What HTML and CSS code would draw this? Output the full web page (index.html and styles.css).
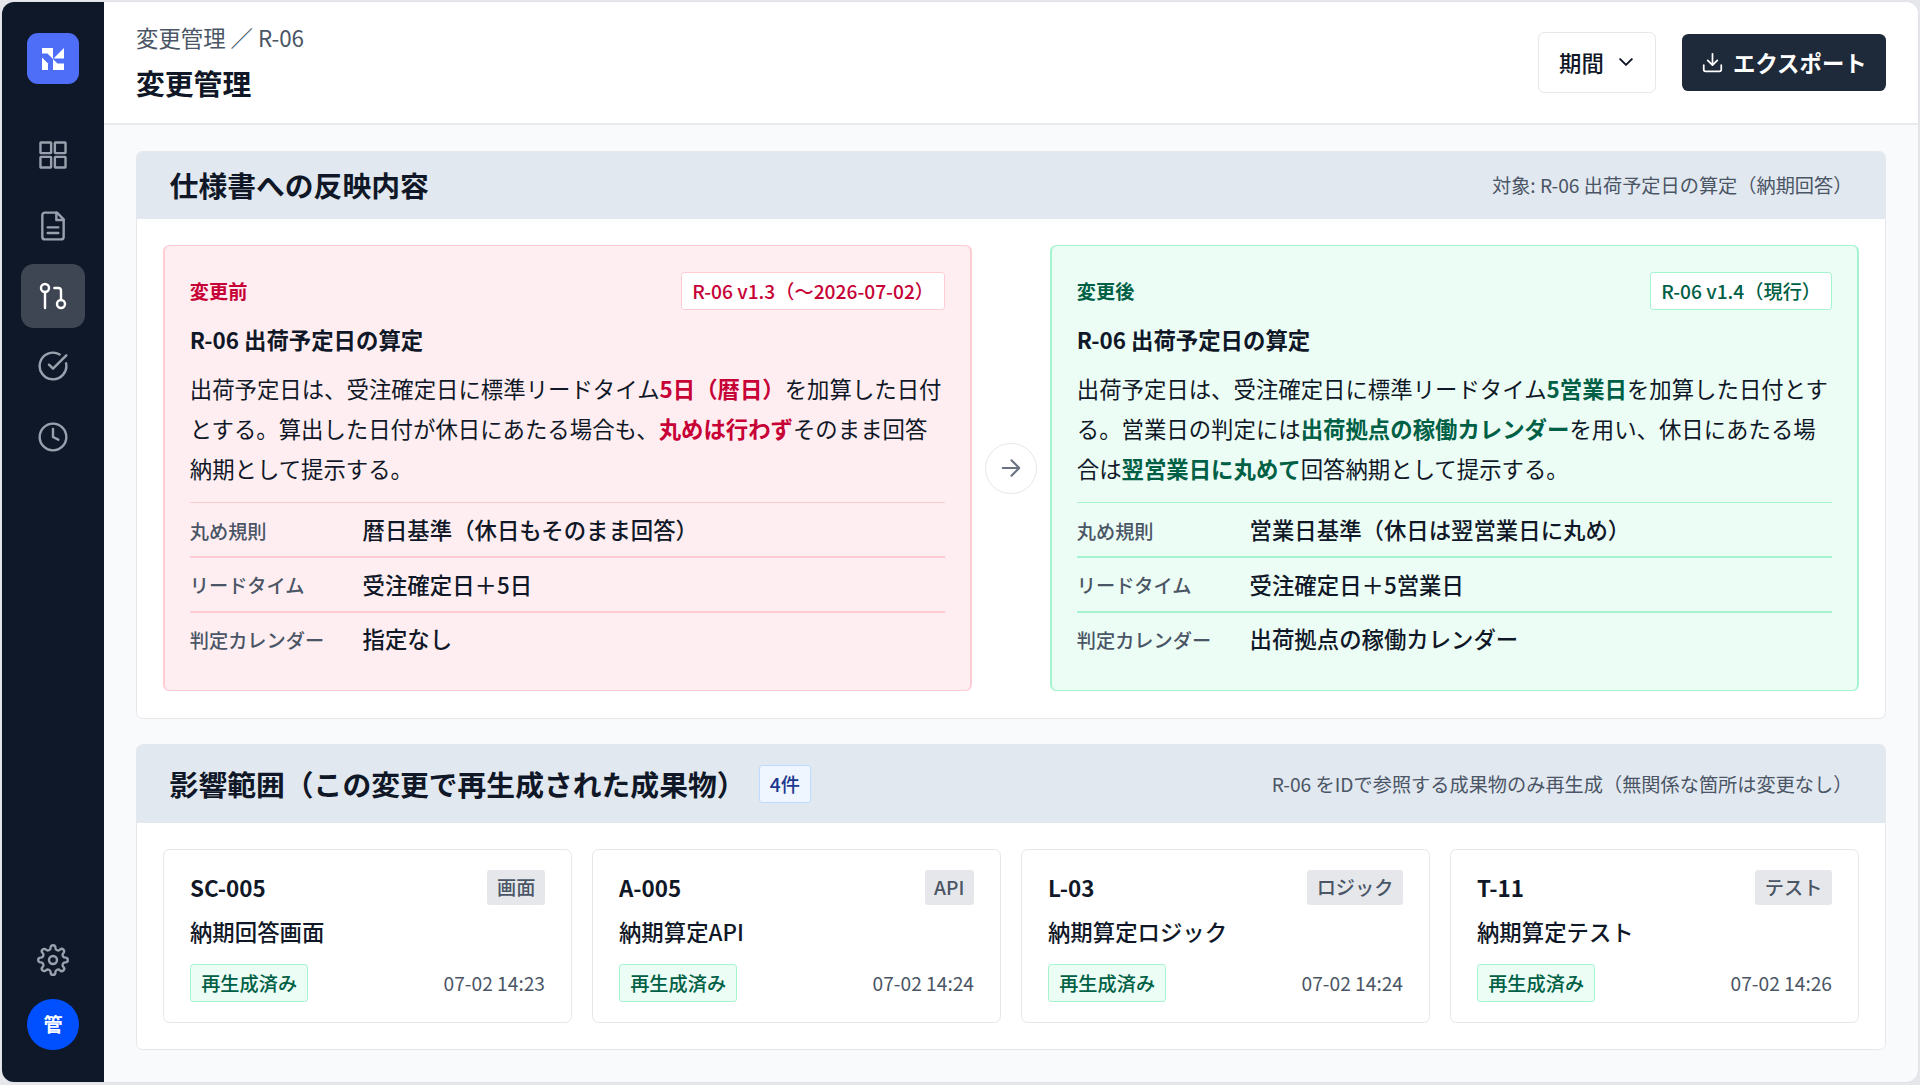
FILE: index.html
```
<!DOCTYPE html>
<html lang="ja">
<head>
  <meta charset="UTF-8">
  <meta name="viewport" content="width=device-width, initial-scale=1.0">
  <title>変更管理</title>
  <link rel="stylesheet" href="styles.css">
</head>
<body>
  <div class="app">
    <aside class="sidebar">
      <div class="logo">
        <svg viewBox="0 0 22 22">
          <path d="M0 0h11v11L5.5 5.500H0z"/>
          <path d="M22 0v10.500H11.500z"/>
          <path d="M0 9.500L6 15.500V22H0z"/>
          <path d="M11 11l4.500 4.500H22V22H11z"/>
        </svg>
      </div>
      <nav class="nav">
        <a class="nav-item">
          <svg class="icon" viewBox="0 0 24 24"><rect x="2.600" y="2.600" width="8" height="8" rx=".4"/><rect x="13.400" y="2.600" width="8" height="8" rx=".4"/><rect x="2.600" y="13.400" width="8" height="8" rx=".4"/><rect x="13.400" y="13.400" width="8" height="8" rx=".4"/></svg>
        </a>
        <a class="nav-item">
          <svg class="icon" viewBox="0 0 24 24"><path d="M15 2H6a2 2 0 0 0-2 2v16a2 2 0 0 0 2 2h12a2 2 0 0 0 2-2V7z"/><path d="M14.500 2v5.500H20"/><path d="M8 13h8M8 17.300h8"/></svg>
        </a>
        <a class="nav-item active">
          <svg class="icon" viewBox="0 0 24 24"><circle cx="18" cy="18" r="3"/><circle cx="6" cy="6" r="3"/><path d="M13 6h3a2 2 0 0 1 2 2v7"/><path d="M6 9v12"/></svg>
        </a>
        <a class="nav-item">
          <svg class="icon" viewBox="0 0 24 24"><path d="M21.800 10A10 10 0 1 1 17 3.335"/><path d="m9 11 3 3L22 4"/></svg>
        </a>
        <a class="nav-item">
          <svg class="icon" viewBox="0 0 24 24"><circle cx="12" cy="12" r="10"/><path d="M12 6v6l4 2"/></svg>
        </a>
      </nav>
      <div class="sidebar-bottom">
        <svg class="icon" viewBox="0 0 24 24"><path d="M21.300 10.200A1.800 1.800 0 0 1 21.300 13.800A2 2 0 0 0 19.850 17.300A1.800 1.800 0 0 1 17.300 19.850A2 2 0 0 0 13.800 21.300A1.800 1.800 0 0 1 10.200 21.300A2 2 0 0 0 6.700 19.850A1.800 1.800 0 0 1 4.150 17.300A2 2 0 0 0 2.700 13.800A1.800 1.800 0 0 1 2.700 10.200A2 2 0 0 0 4.150 6.700A1.800 1.800 0 0 1 6.700 4.150A2 2 0 0 0 10.200 2.700A1.800 1.800 0 0 1 13.800 2.700A2 2 0 0 0 17.300 4.150A1.800 1.800 0 0 1 19.850 6.700A2 2 0 0 0 21.300 10.200z"/><circle cx="12" cy="12" r="3"/></svg>
        <div class="avatar">管</div>
      </div>
    </aside>

    <div class="main">
      <header class="topbar">
        <div>
          <div class="breadcrumb">変更管理 ／ R-06</div>
          <h1>変更管理</h1>
        </div>
        <div class="actions">
          <button class="btn btn-period">期間
            <svg class="chevron" viewBox="0 0 24 24"><path d="m5 8.500 7 7 7-7"/></svg>
          </button>
          <button class="btn btn-export">
            <svg class="download" viewBox="0 0 24 24"><path d="M12 2v13M6.500 9.500 12 15l5.500-5.500M2 15v5a2 2 0 0 0 2 2h16a2 2 0 0 0 2-2v-5"/></svg>
            エクスポート
          </button>
        </div>
      </header>

      <main class="content">
        <section class="card">
          <div class="card-header">
            <h2>仕様書への反映内容</h2>
            <span class="card-note">対象: R-06 出荷予定日の算定（納期回答）</span>
          </div>
          <div class="compare">
            <div class="panel before">
              <div class="panel-head">
                <span class="panel-label">変更前</span>
                <span class="badge version">R-06 v1.3（〜2026-07-02）</span>
              </div>
              <h3>R-06 出荷予定日の算定</h3>
              <p>出荷予定日は、受注確定日に標準リードタイム<b>5日（暦日）</b>を加算した日付とする。算出した日付が休日にあたる場合も、<b>丸めは行わず</b>そのまま回答納期として提示する。</p>
              <dl>
                <div class="row"><dt>丸め規則</dt><dd>暦日基準（休日もそのまま回答）</dd></div>
                <div class="row"><dt>リードタイム</dt><dd>受注確定日＋5日</dd></div>
                <div class="row"><dt>判定カレンダー</dt><dd>指定なし</dd></div>
              </dl>
            </div>
            <div class="arrow">
              <svg viewBox="0 0 24 24"><path d="M3 12h18M12.500 3.500 21 12l-8.500 8.500"/></svg>
            </div>
            <div class="panel after">
              <div class="panel-head">
                <span class="panel-label">変更後</span>
                <span class="badge version">R-06 v1.4（現行）</span>
              </div>
              <h3>R-06 出荷予定日の算定</h3>
              <p>出荷予定日は、受注確定日に標準リードタイム<b>5営業日</b>を加算した日付とする。営業日の判定には<b>出荷拠点の稼働カレンダー</b>を用い、休日にあたる場合は<b>翌営業日に丸めて</b>回答納期として提示する。</p>
              <dl>
                <div class="row"><dt>丸め規則</dt><dd>営業日基準（休日は翌営業日に丸め）</dd></div>
                <div class="row"><dt>リードタイム</dt><dd>受注確定日＋5営業日</dd></div>
                <div class="row"><dt>判定カレンダー</dt><dd>出荷拠点の稼働カレンダー</dd></div>
              </dl>
            </div>
          </div>
        </section>

        <section class="card">
          <div class="card-header">
            <h2>影響範囲（この変更で再生成された成果物）</h2>
            <span class="badge count">4件</span>
            <span class="card-note">R-06 をIDで参照する成果物のみ再生成（無関係な箇所は変更なし）</span>
          </div>
          <div class="items">
            <div class="item">
              <div class="item-row"><strong>SC-005</strong><span class="tag">画面</span></div>
              <div class="item-name">納期回答画面</div>
              <div class="item-row"><span class="badge done">再生成済み</span><time>07-02 14:23</time></div>
            </div>
            <div class="item">
              <div class="item-row"><strong>A-005</strong><span class="tag">API</span></div>
              <div class="item-name">納期算定API</div>
              <div class="item-row"><span class="badge done">再生成済み</span><time>07-02 14:24</time></div>
            </div>
            <div class="item">
              <div class="item-row"><strong>L-03</strong><span class="tag">ロジック</span></div>
              <div class="item-name">納期算定ロジック</div>
              <div class="item-row"><span class="badge done">再生成済み</span><time>07-02 14:24</time></div>
            </div>
            <div class="item">
              <div class="item-row"><strong>T-11</strong><span class="tag">テスト</span></div>
              <div class="item-name">納期算定テスト</div>
              <div class="item-row"><span class="badge done">再生成済み</span><time>07-02 14:26</time></div>
            </div>
          </div>
        </section>
      </main>
    </div>
  </div>
</body>
</html>
```
FILE: styles.css
```
* {
  box-sizing: border-box;
}

body {
  margin: 0;
  padding: 1px 1px 2px;
  height: 1085px;
  overflow: hidden;
  background: #e5e7eb;
  color: #101828;
  font-family: "Noto Sans CJK JP", sans-serif;
  font-size: 22.4px;
}

h1, h2, h3, p, dl, dd {
  margin: 0;
}

.app {
  display: flex;
  height: 1082px;
  border: 1px solid #dfe2e6;
  border-radius: 13px;
  overflow: hidden;
  background: #f9fafb;
}

/* sidebar */
.sidebar {
  width: 102px;
  flex-shrink: 0;
  display: flex;
  flex-direction: column;
  align-items: center;
  padding: 31px 0 32px;
  background: #0f1828;
}

.logo {
  width: 51.2px;
  height: 51.2px;
  display: flex;
  align-items: center;
  justify-content: center;
  border-radius: 11px;
  background: #4f6ef7;
}

.logo svg {
  width: 22px;
  height: 22px;
  fill: #fff;
}

.nav {
  display: flex;
  flex-direction: column;
  gap: 6.4px;
  margin-top: 39px;
}

.nav-item {
  width: 64px;
  height: 64px;
  display: flex;
  align-items: center;
  justify-content: center;
  border-radius: 12.8px;
  color: #99a1af;
}

.nav-item.active {
  background: rgba(255, 255, 255, 0.2);
  color: #fff;
}

svg {
  fill: none;
  stroke-linecap: round;
  stroke-linejoin: round;
}

.icon {
  width: 32px;
  height: 32px;
  stroke: currentColor;
  stroke-width: 1.8;
}

.sidebar-bottom {
  margin-top: auto;
  display: flex;
  flex-direction: column;
  align-items: center;
  gap: 22.4px;
  color: #99a1af;
}

.avatar {
  width: 51.2px;
  height: 51.2px;
  border-radius: 50%;
  background: #0050ff;
  color: #fff;
  font-size: 19.2px;
  font-weight: 700;
  line-height: 51.2px;
  text-align: center;
}

/* top bar */
.main {
  flex: 1;
  display: flex;
  flex-direction: column;
}

.topbar {
  height: 123px;
  flex-shrink: 0;
  display: flex;
  align-items: center;
  justify-content: space-between;
  padding: 0 32px;
  background: #fff;
  border-bottom: 2px solid #e7eaed;
}

.breadcrumb {
  line-height: 36px;
  color: #4a5565;
}

h1 {
  margin-top: 5px;
  margin-bottom: 1px;
  font-size: 28.8px;
  line-height: 46px;
}

.actions {
  display: flex;
  align-items: center;
  gap: 25.6px;
}

.btn {
  display: flex;
  align-items: center;
  border-radius: 6.4px;
  font-family: inherit;
  font-size: 22.4px;
  white-space: nowrap;
}

.btn-period {
  width: 118px;
  height: 60.8px;
  gap: 12px;
  padding: 0 19.6px;
  border: 1.6px solid #e5e7eb;
  background: #fff;
  color: #101828;
  font-weight: 500;
}

.btn-export {
  width: 204px;
  height: 57.6px;
  gap: 10px;
  padding: 0 20px;
  border: none;
  background: #1e2939;
  color: #fff;
  font-weight: 700;
}

.chevron {
  width: 20px;
  height: 20px;
  stroke: currentColor;
  stroke-width: 2.4;
}

.download {
  width: 21px;
  height: 21px;
  flex-shrink: 0;
  stroke: currentColor;
  stroke-width: 2;
}

/* cards */
.content {
  display: flex;
  flex-direction: column;
  gap: 25.6px;
  padding: 25.6px 32px;
}

.card {
  border: 1px solid #e5e7eb;
  border-radius: 6.4px;
  background: #fff;
  overflow: hidden;
}

.card-header {
  display: flex;
  align-items: center;
  padding: 19.2px 32.6px;
  background: #e2e8f0;
}

h2 {
  font-size: 28.8px;
  line-height: 28.8px;
}

.card-note {
  margin-left: auto;
  font-size: 19.2px;
  line-height: 28px;
  color: #4a5565;
}

.badge {
  display: block;
  height: 38px;
  padding: 0 10.2px;
  border: 1px solid;
  border-radius: 3.2px;
  font-size: 19.2px;
  font-weight: 500;
  line-height: 36px;
}

.count {
  margin: 0.8px 0 0.8px 13px;
  background: #eff6ff;
  border-color: #bedbff;
  color: #1c398e;
}

/* before / after */
.compare {
  display: flex;
  align-items: center;
  gap: 13px;
  padding: 26.2px 25.6px 26.6px;
}

.panel {
  flex: 1;
  min-width: 0;
  padding: 26.2px 25.2px 25.2px;
  border: solid var(--line);
  border-width: 1px 2px;
  border-radius: 6.4px;
  background: var(--bg);
}

.before {
  --bg: #ffeef1;
  --line: #ffccd3;
  --text: #c70036;
}

.after {
  --bg: #ecfdf5;
  --line: #a4f4cf;
  --text: #006045;
}

.panel-head {
  display: flex;
  align-items: center;
  justify-content: space-between;
}

.panel-label {
  font-size: 19.2px;
  font-weight: 700;
  color: var(--text);
}

.version {
  background: #fff;
  border-color: var(--line);
  color: var(--text);
}

h3 {
  margin-top: 11px;
  font-size: 22.4px;
  line-height: 36px;
}

.panel p {
  margin-top: 10.5px;
  line-height: 40.32px;
}

.panel p b {
  color: var(--text);
}

.panel dl {
  margin-top: 13.3px;
}

.row {
  height: 54.4px;
  display: flex;
  align-items: center;
  border-top: 1px solid var(--line);
}

.row + .row {
  border-top-width: 2px;
}

.row dt {
  width: 172.8px;
  padding-top: 2px;
  font-size: 19.2px;
  font-weight: 500;
  color: #4a5565;
}

.row dd {
  padding-bottom: 1px;
  font-weight: 500;
}

.arrow {
  width: 51.2px;
  height: 51.2px;
  flex-shrink: 0;
  display: flex;
  align-items: center;
  justify-content: center;
  border: 1px solid #e5e7eb;
  border-radius: 50%;
}

.arrow svg {
  width: 22px;
  height: 22px;
  stroke: #6a7282;
  stroke-width: 2.2;
}

/* regenerated items */
.items {
  display: grid;
  grid-template-columns: repeat(4, 1fr);
  gap: 19.2px;
  padding: 25.6px 25.6px 26px;
}

.item {
  padding: 19.8px 26.4px 20px;
  border: 1px solid #e5e7eb;
  border-radius: 6.4px;
}

.item-row {
  display: flex;
  align-items: center;
  justify-content: space-between;
}

.item-row strong {
  line-height: 35px;
}

.tag {
  height: 35px;
  padding: 0 9.6px;
  border-radius: 3.2px;
  background: #e5e7eb;
  color: #4a5565;
  font-size: 19.2px;
  font-weight: 500;
  line-height: 35px;
}

.item-name {
  margin: 9.4px 0 14px;
  font-weight: 500;
  line-height: 35.8px;
}

.done {
  background: #ecfdf5;
  border-color: #a4f4cf;
  color: #006045;
}

.item-row time {
  font-size: 19.2px;
  color: #4a5565;
}
```
